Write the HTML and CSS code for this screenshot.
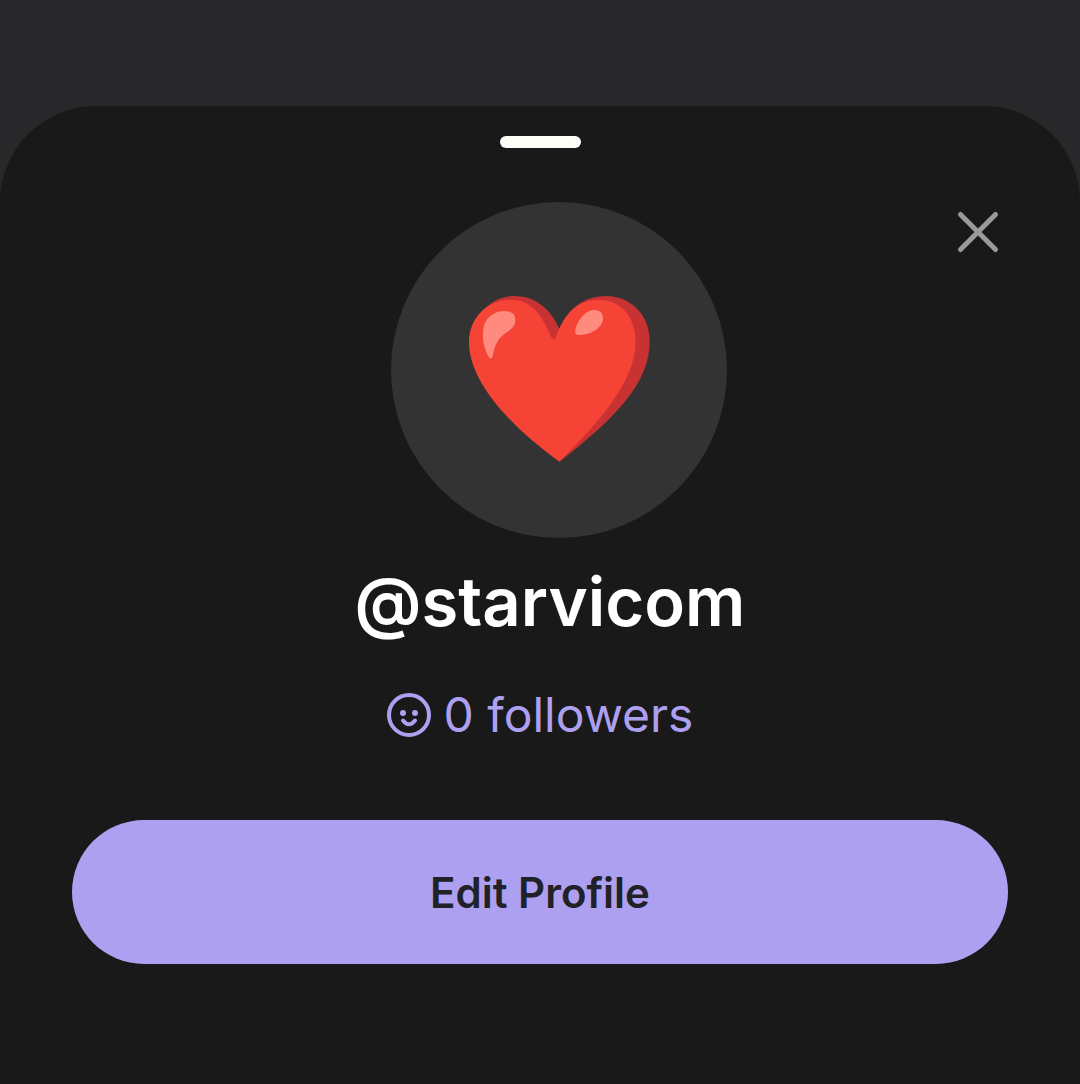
FILE: index.html
```html
<!DOCTYPE html>
<html lang="en">
<head>
<meta charset="utf-8">
<meta name="viewport" content="width=device-width, initial-scale=1">
<title>Profile</title>
<link rel="stylesheet" href="styles.css">
</head>
<body>
<main class="sheet">
  <div class="handle"></div>
  <button class="close" type="button" aria-label="Close">
    <svg viewBox="0 0 48 48" width="48" height="48" fill="none" stroke="#999" stroke-width="5" stroke-linecap="round"><path d="M6.500 6.500 41.500 41.500M41.500 6.500 6.500 41.500"/></svg>
  </button>
  <div class="avatar">
    <svg viewBox="27 -30 600 600" width="200" height="200" aria-hidden="true">
      <path fill="#c93232" d="M328 147C352 90 400 48 467 48C545 48 599 108 599 184C599 308 500 412 328 545Z"/>
      <path fill="#c93232" d="M104 86C134 58 162 48 194 48C260 48 303 91 328 147L320 260L140 120Z"/>
      <path fill="#f54336" d="M328 545C166 428 57 298 57 187C57 115 110 59 182 59C250 59 281 115 304 172C308 181 314 180 318 171C341 108 376 59 446 59C512 59 557 111 557 184C557 298 458 418 328 545Z"/>
      <path fill="#ff8a7e" d="M117 232C102 208 97 178 99 152C102 117 128 93 163 93C187 93 197 105 196 122C195 142 178 151 162 163C140 180 133 202 128 228C126 236 121 238 117 232Z"/>
      <path fill="#ff8a7e" d="M376 153C379 127 404 90 433 90C451 90 460 101 459 117C457 145 419 165 389 165C379 165 374 161 376 153Z"/>
    </svg>
  </div>
  <h1 class="name">@starvicom</h1>
  <a class="followers" href="#followers">
    <svg viewBox="0 0 44 44" width="44" height="44" fill="none" stroke="currentColor" stroke-width="4" stroke-linecap="round" aria-hidden="true"><circle cx="22" cy="22" r="20"/><path d="M16 27.500Q22 35 28 27.500"/><g fill="currentColor" stroke="none"><circle cx="16" cy="20" r="3"/><circle cx="28" cy="20" r="3"/></g></svg>
    <span>0 followers</span>
  </a>
  <button class="edit" type="button">Edit Profile</button>
</main>
</body>
</html>
```
FILE: styles.css
```css
* {
  box-sizing: border-box;
}

body {
  margin: 0;
  min-height: 100vh;
  display: flex;
  flex-direction: column;
  padding-top: 106px;
  background: #28282a;
  font-family: Inter, "Liberation Sans", sans-serif;
}

.sheet {
  position: relative;
  flex: 1;
  display: flex;
  flex-direction: column;
  align-items: center;
  padding: 30px 72px 120px;
  border-radius: 96px 96px 0 0;
  background: #191919;
}

.handle {
  width: 81px;
  height: 12px;
  border-radius: 6px;
  background: #fffffa;
}

.close {
  position: absolute;
  top: 102px;
  right: 78px;
  width: 48px;
  height: 48px;
  padding: 0;
  border: 0;
  background: none;
  cursor: pointer;
}

.close svg {
  display: block;
}

.avatar {
  display: grid;
  place-items: center;
  width: 336px;
  height: 336px;
  margin: 54px 0 0 38px;
  border-radius: 50%;
  background: #333;
}

.name {
  margin: 22px 0 0 20px;
  color: #fff;
  font-size: 67px;
  font-weight: 600;
  line-height: 84px;
}

.followers {
  display: flex;
  align-items: center;
  gap: 13px;
  margin-top: 39px;
  color: #ada0f0;
  font-size: 48px;
  line-height: 64px;
  text-decoration: none;
}

.edit {
  width: 100%;
  height: 144px;
  margin-top: 73px;
  border: 0;
  border-radius: 72px;
  background: #ada0f0;
  color: #212128;
  font: inherit;
  font-size: 42px;
  font-weight: 600;
  cursor: pointer;
}
```
